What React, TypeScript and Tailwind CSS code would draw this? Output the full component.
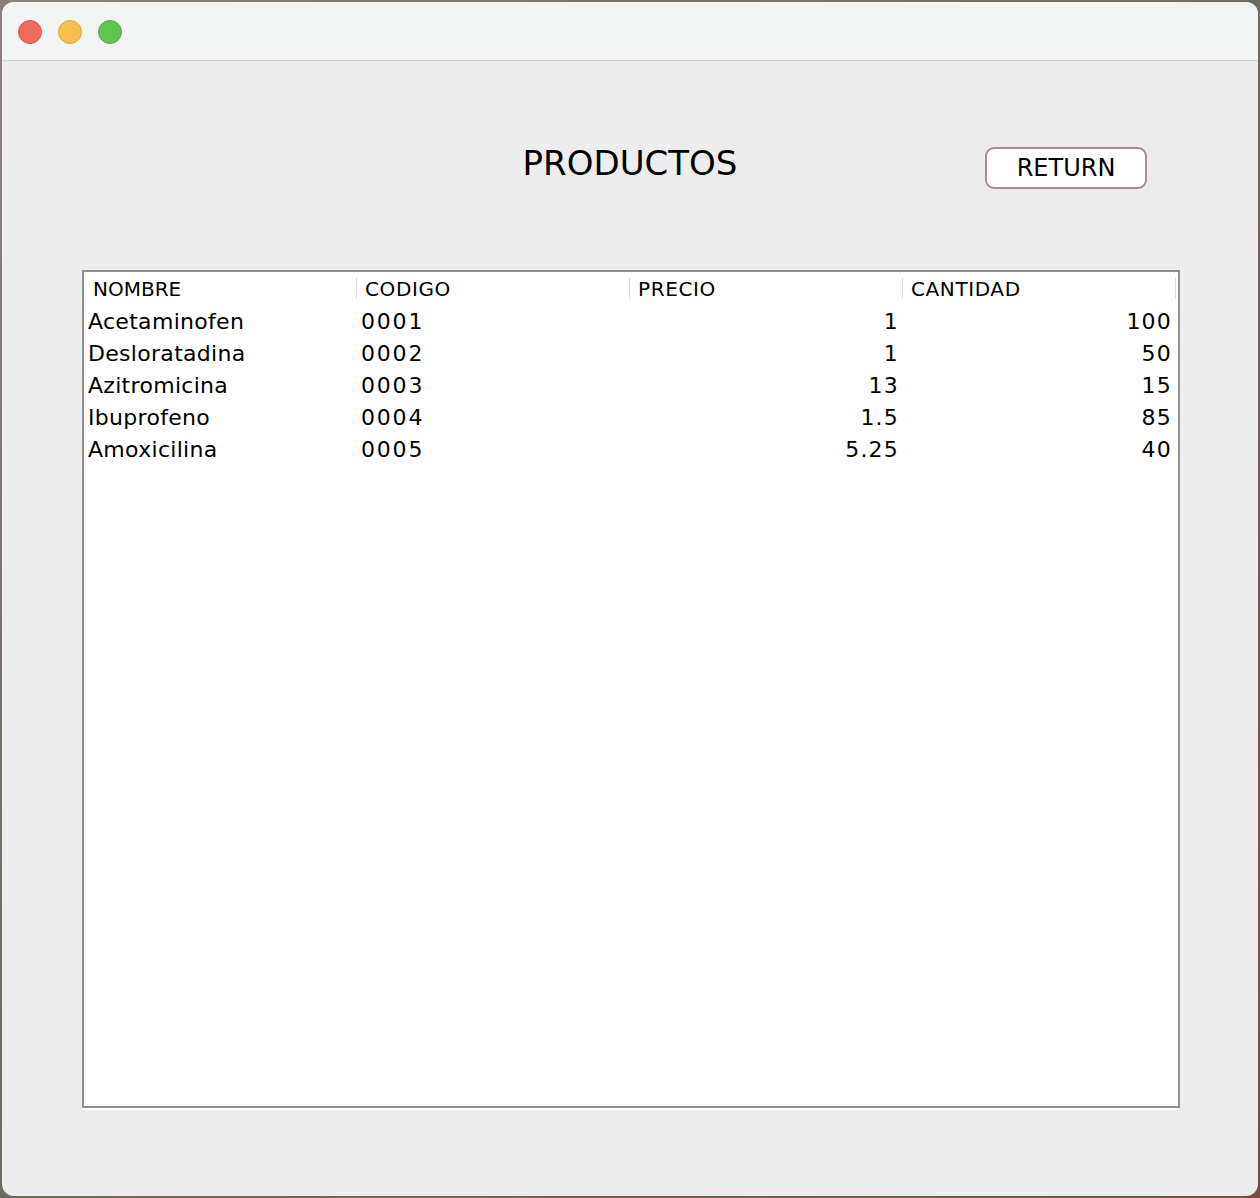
import React from "react";

const rows = [
  { nombre: "Acetaminofen", codigo: "0001", precio: "1", cantidad: "100" },
  { nombre: "Desloratadina", codigo: "0002", precio: "1", cantidad: "50" },
  { nombre: "Azitromicina", codigo: "0003", precio: "13", cantidad: "15" },
  { nombre: "Ibuprofeno", codigo: "0004", precio: "1.5", cantidad: "85" },
  { nombre: "Amoxicilina", codigo: "0005", precio: "5.25", cantidad: "40" },
];

const headers = ["NOMBRE", "CODIGO", "PRECIO", "CANTIDAD"];

function HeaderCell({ label, first }: { label: string; first?: boolean }) {
  return (
    <div className="flex h-full items-center">
      <span className={first ? "flex-1 pl-[9px]" : "flex-1 pl-2 tracking-[0.6px]"}>{label}</span>
      <div className="h-[21px] w-px bg-[#d9d9d9]" />
    </div>
  );
}

export default function App() {
  return (
    <div
      className="h-[1198px] w-[1260px] bg-gradient-to-br from-[#8f7f7c] via-[#6f6a5f] to-[#7b4a3a] p-[2px]"
      style={{ fontFamily: '"DejaVu Sans", "Liberation Sans", sans-serif' }}
    >
      <div className="flex h-[1194px] w-[1256px] flex-col overflow-hidden rounded-[12px] bg-[#ededed]">
        {/* Title bar */}
        <div className="flex h-[59px] shrink-0 items-start gap-4 border-b border-[#d2d2d2] bg-[#f2f3f3] pl-4 pt-[18px]">
          <div className="h-6 w-6 rounded-full border border-[#d9564c] bg-[#ee6a5f]" />
          <div className="h-6 w-6 rounded-full border border-[#dca43e] bg-[#f6be4f]" />
          <div className="h-6 w-6 rounded-full border border-[#52ab46] bg-[#61c554]" />
        </div>

        {/* Body */}
        <div className="flex flex-1 flex-col px-[80px] pt-[85px]">
          <div className="grid grid-cols-[1fr_auto_1fr] items-start">
            <div />
            <h1 className="text-[34px] leading-[34px] text-black">PRODUCTOS</h1>
            <div className="flex justify-end pr-[31px]">
              <button className="mt-px flex h-[42px] w-[162px] items-center justify-center rounded-[9px] border-2 border-[#a88c8f] bg-white text-[24px] text-black">
                RETURN
              </button>
            </div>
          </div>

          <div className="mt-[81px] h-[838px] w-[1098px] border-2 border-[#8f8f8f] bg-white shadow-[0_2px_0_#ffffff] text-black">
            <div className="grid h-[33px] grid-cols-[273px_273px_273px_273px] text-[20px]">
              {headers.map((h, i) => (
                <HeaderCell key={h} label={h} first={i === 0} />
              ))}
            </div>
            {rows.map((r) => (
              <div
                key={r.codigo}
                className="grid h-[32px] grid-cols-[273px_273px_273px_273px] items-center text-[22px]"
              >
                <span className="pl-1 tracking-[0.3px]">{r.nombre}</span>
                <span className="pl-1 tracking-[1.8px]">{r.codigo}</span>
                <span className="pr-[4px] text-right tracking-[1.2px]">{r.precio}</span>
                <span className="pr-[4px] text-right tracking-[1.2px]">{r.cantidad}</span>
              </div>
            ))}
          </div>
        </div>
      </div>
    </div>
  );
}
